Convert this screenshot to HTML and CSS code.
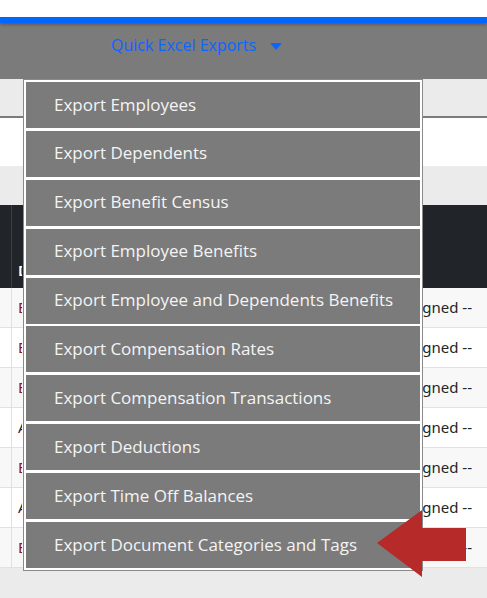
FILE: index.html
```html
<!DOCTYPE html>
<html>
<head>
<meta charset="utf-8">
<link rel="stylesheet" href="styles.css">
</head>
<body>
<div class="page">
  <div class="topgap"></div>
  <div class="bluebar"></div>
  <nav class="navbar">
    <a class="navlink">Quick Excel Exports <span class="caret"></span></a>
  </nav>
  <div class="subbar"></div>
  <div class="whitezone"></div>
  <div class="lightband"></div>
  <div class="thead">
    <div class="th th-first"></div>
    <div class="th clip-left">Description</div>
    <div class="th"></div>
  </div>
  <div class="tbody">
    <div class="tr"><div class="td td-first"></div><div class="td clip-left red">Benefits Plan</div><div class="td spacer"></div><div class="td clip-right"><span>-- Not Assigned --</span></div></div>
    <div class="tr"><div class="td td-first"></div><div class="td clip-left red">Benefits Plan</div><div class="td spacer"></div><div class="td clip-right"><span>-- Not Assigned --</span></div></div>
    <div class="tr"><div class="td td-first"></div><div class="td clip-left red">Benefits Plan</div><div class="td spacer"></div><div class="td clip-right"><span>-- Not Assigned --</span></div></div>
    <div class="tr"><div class="td td-first"></div><div class="td clip-left dark">Accrual Plan</div><div class="td spacer"></div><div class="td clip-right"><span>-- Not Assigned --</span></div></div>
    <div class="tr"><div class="td td-first"></div><div class="td clip-left red">Benefits Plan</div><div class="td spacer"></div><div class="td clip-right"><span>-- Not Assigned --</span></div></div>
    <div class="tr"><div class="td td-first"></div><div class="td clip-left dark">Accrual Plan</div><div class="td spacer"></div><div class="td clip-right"><span>-- Not Assigned --</span></div></div>
    <div class="tr"><div class="td td-first"></div><div class="td clip-left red">Benefits Plan</div><div class="td spacer"></div><div class="td clip-right"><span>-- Not Assigned --</span></div></div>
  </div>
  <div class="footer"></div>

  <ul class="menu">
    <li class="menu-item">Export Employees</li>
    <li class="menu-item">Export Dependents</li>
    <li class="menu-item">Export Benefit Census</li>
    <li class="menu-item">Export Employee Benefits</li>
    <li class="menu-item">Export Employee and Dependents Benefits</li>
    <li class="menu-item">Export Compensation Rates</li>
    <li class="menu-item">Export Compensation Transactions</li>
    <li class="menu-item">Export Deductions</li>
    <li class="menu-item">Export Time Off Balances</li>
    <li class="menu-item">Export Document Categories and Tags</li>
  </ul>

  <svg class="arrow" width="89" height="67" viewBox="0 0 89 67">
    <polygon points="0,33 45,0 45,18 89,18 89,51 45,51 45,67" fill="#b72a2a"/>
  </svg>
</div>
</body>
</html>
```

FILE: styles.css
```css
html, body {
  margin: 0;
  padding: 0;
}
body {
  font-family: "Open Sans", "Noto Sans", sans-serif;
  background: #ebebeb;
}
.page {
  position: relative;
  width: 487px;
  height: 598px;
  overflow: hidden;
  background: #ebebeb;
}
.topgap {
  height: 17px;
  background: #ffffff;
}
.bluebar {
  height: 6px;
  background: #0066ff;
  position: relative;
  z-index: 1;
  box-shadow: 0 2px 3px rgba(0,0,0,0.25);
}
.navbar {
  height: 56px;
  background: #7b7b7b;
  display: flex;
  align-items: flex-start;
  padding-left: 111px;
  box-sizing: border-box;
  padding-top: 11px;
}
.navlink {
  color: #0a66ff;
  font-size: 16px;
  line-height: 22px;
  display: flex;
  align-items: center;
  gap: 14px;
}
.caret {
  display: inline-block;
  width: 0;
  height: 0;
  border-left: 6px solid transparent;
  border-right: 6px solid transparent;
  border-top: 7px solid #0a66ff;
  margin-top: 3px;
}
.subbar {
  height: 37px;
  background: #ebebeb;
  border-bottom: 2px solid #7b7b7b;
}
.whitezone {
  height: 48px;
  background: #ffffff;
}
.lightband {
  height: 39px;
  background: #ebebeb;
}
.thead {
  height: 83px;
  background: #212529;
  display: grid;
  grid-template-columns: 12px 10px 1fr;
  align-items: end;
  color: #ffffff;
  font-family: "Noto Sans", "Open Sans", sans-serif;
  font-weight: 600;
  font-size: 15px;
}
.th {
  padding: 0 0 8px 0;
}
.th-first {
  border-right: 1px solid #3a3f44;
  height: 100%;
  padding: 0;
}
.th.clip-left {
  padding-left: 6px;
}
.tbody {
  background: #ffffff;
}
.tr {
  height: 40px;
  display: grid;
  grid-template-columns: 12px 10px 1fr 72px;
  align-items: center;
  border-bottom: 1px solid #dee2e6;
  box-sizing: border-box;
  font-family: "Noto Sans", "Open Sans", sans-serif;
  font-size: 15px;
  color: #212529;
  padding-right: 15px;
  padding-bottom: 2px;
}
.tr:nth-child(odd) {
  background: #f8f8f8;
}
.td-first {
  height: calc(100% + 2px);
  border-right: 1px solid #dee2e6;
  align-self: start;
}
.clip-left {
  overflow: hidden;
  white-space: nowrap;
  padding-left: 6px;
}
.clip-right {
  overflow: hidden;
  white-space: nowrap;
  display: flex;
  justify-content: flex-end;
}
.clip-right span {
  flex: none;
}
.red {
  color: #8b1014;
}
.dark {
  color: #212529;
}
.footer {
  height: 30px;
  background: #ebebeb;
}
.menu {
  position: absolute;
  left: 23px;
  top: 79px;
  width: 400px;
  box-sizing: border-box;
  margin: 0;
  padding: 2px;
  list-style: none;
  background: #ffffff;
  border: 1px solid #8a8a8a;
  display: flex;
  flex-direction: column;
  gap: 2.9px;
  z-index: 5;
}
.menu-item {
  height: 46px;
  background: #7b7b7b;
  color: #f4f4f4;
  font-size: 17px;
  display: flex;
  align-items: center;
  padding-left: 28px;
  padding-bottom: 2px;
  box-sizing: border-box;
}
.arrow {
  position: absolute;
  left: 377px;
  top: 510px;
  z-index: 10;
}
```
